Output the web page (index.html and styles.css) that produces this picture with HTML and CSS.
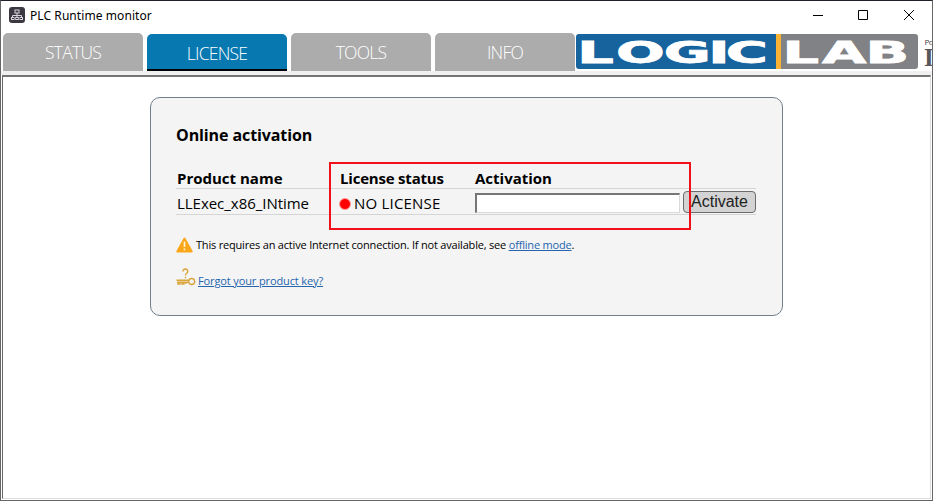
FILE: index.html
```html
<!DOCTYPE html>
<html lang="en">
<head>
<meta charset="utf-8">
<title>PLC Runtime monitor</title>
<link rel="stylesheet" href="styles.css">
</head>
<body>
<div class="window">
  <header class="titlebar">
    <svg class="app-icon" width="16" height="16" viewBox="0 0 16 16"><rect width="16" height="16" rx="3" fill="#3b3842"/><g fill="none" stroke="#d6d6dc" stroke-width="1"><rect x="6" y="3" width="4" height="3"/><path d="M8 6V10M3.500 10V8.500H12.500V10"/><rect x="2.500" y="10.500" width="2.500" height="2"/><rect x="6.750" y="10.500" width="2.500" height="2"/><rect x="11" y="10.500" width="2.500" height="2"/></g></svg>
    <span class="app-title">PLC Runtime monitor</span>
    <svg class="controls" width="104" height="12" viewBox="0 0 104 12" fill="none" stroke="#000"><path d="M0 6.500H10M45.500 1.500H54.500V10.500H45.500ZM91 1L101 11M101 1L91 11"/></svg>
  </header>
  <nav class="tabs">
    <a class="tab"><span>STATUS</span></a>
    <a class="tab active"><span>LICENSE</span></a>
    <a class="tab"><span>TOOLS</span></a>
    <a class="tab"><span>INFO</span></a>
    <svg class="logo" width="357" height="37" viewBox="575 33 357 37">
      <path d="M579 34H776V69H579Q576 69 576 66V37Q576 34 579 34Z" fill="#17639e"/>
      <rect x="776" y="34" width="5" height="35" fill="#f9b233"/>
      <path d="M781 34H915Q918 34 918 37V66Q918 69 915 69H781Z" fill="#808285"/>
      <text class="word" transform="translate(0 63) scale(1.850 1)" x="312 333 358.800 382.800 392.300">LOGIC</text>
      <text class="word" transform="translate(0 63) scale(1.850 1)" x="423 444.300 467.900">LAB</text>
      <text class="powered" x="924.500" y="45">Po</text>
      <text class="partner" x="924" y="66">I</text>
    </svg>
  </nav>
  <main class="view">
    <section class="card">
      <h1>Online activation</h1>
      <div class="grid head"><span class="h-name">Product name</span><span class="h-status">License status</span><span class="h-act">Activation</span></div>
      <div class="grid row">
        <span class="product">LLExec_x86_INtime</span>
        <span class="status"><i class="dot"></i><span>NO LICENSE</span></span>
        <span class="activation"><input type="text" aria-label="Activation"><button>Activate</button></span>
      </div>
      <div class="highlight"></div>
      <p class="note">
        <svg width="17" height="16" viewBox="0 0 17 16"><path d="M8.500 1.500L15.700 14.500H1.300Z" fill="#faa61a" stroke="#faa61a" stroke-width="2" stroke-linejoin="round"/><path d="M8.500 4.500V10M8.500 11.500V13.300" stroke="#fff3d0" stroke-width="1.700"/></svg>
        <span class="warn-text">This requires an active Internet connection. If not available, see <a>offline mode</a>.</span>
      </p>
      <p class="forgot">
        <svg width="20" height="19" viewBox="0 0 20 19" fill="none" stroke="#d9a53a" stroke-width="1.400"><path d="M7 3.500Q7.200 1 9.400 1T11.800 3.500Q11.800 4.700 10.300 5.500Q9.500 6 9.500 7.500M9.500 8.700V10.300"/><circle cx="15.700" cy="13.500" r="3"/><path d="M12.700 12.200H.5M12.700 14.200H1M2 14V16H4V14M6 14V16H8V14M10 14V16"/></svg>
        <a>Forgot your product key?</a>
      </p>
    </section>
  </main>
</div>
</body>
</html>
```

FILE: styles.css
```css
* { box-sizing: border-box; }
body { margin: 0; width: 933px; height: 501px; overflow: hidden; background: #fff; color: #000; font-family: "Open Sans", "Noto Sans", sans-serif; }
.window { width: 933px; height: 501px; border: 1px solid #666; border-top-color: #20202a; display: flex; flex-direction: column; }
.titlebar { height: 32px; flex: none; display: flex; align-items: center; padding: 0 18px 4px 8px; }
.app-icon { flex: none; }
.app-title { font-family: "Noto Sans", sans-serif; font-size: 12px; line-height: 16px; margin-left: 5px; padding-top: 2px; letter-spacing: 0.08px; white-space: nowrap; }
.controls { margin-left: auto; margin-right: -3px; }
.tabs { height: 42px; flex: none; display: flex; gap: 4px; padding-left: 2px; border-bottom: 4px solid #f0eff1; }
.tab { width: 140px; height: 38px; flex: none; background: #acacac; border-radius: 5px 5px 0 0; color: #fff; font-size: 17.5px; font-weight: 300; line-height: 38px; text-align: center; letter-spacing: -0.75px; }
.active { background: #0878b0; border-bottom: 2px solid #000; height: 37px; margin-top: 1px; line-height: 38px; }
.logo { flex: none; margin-left: -4px; }
.word { font: bold 31px "DejaVu Sans", sans-serif; fill: #fff; stroke: #fff; stroke-width: 0.8px; }
.powered { font: 8px "Open Sans", sans-serif; fill: #444; letter-spacing: -0.5px; }
.partner { font: bold 25px "Liberation Serif", serif; fill: #58585a; }
.view { flex: 1; margin: 0 1px 1px; border: 1px solid #dedede; border-top: 2px solid #747474; border-left: 1px solid #666; padding: 20px 0 0 147px; }
.card { position: relative; width: 633px; height: 219px; border: 1px solid #707f8e; border-radius: 10px; background: #f4f4f4; padding: 26px 25px 0; }
h1 { margin: 0; font-size: 16px; line-height: 22px; font-weight: 700; letter-spacing: -0.1px; }
.grid { width: 580px; display: grid; grid-template-columns: 163px 135px 281px; align-items: center; padding-left: 1px; border-bottom: 1px solid #d5d5d5; white-space: nowrap; }
.head { height: 22px; margin-top: 21px; font-size: 15px; font-weight: 700; line-height: 20px; }
.h-status { letter-spacing: -0.2px; }
.row { height: 26px; font-size: 15px; }
.product { padding-top: 2px; letter-spacing: -0.03px; }
.status { display: flex; align-items: center; gap: 4px; margin-left: -1px; padding-top: 2px; letter-spacing: 0.2px; }
.dot { width: 12px; height: 12px; margin: 2px -1px 0 0; border-radius: 50%; background: #f00; border: 1px solid #ff9d9d; }
.activation { display: flex; align-items: center; gap: 3px; }
input { width: 205px; height: 20px; margin-top: 2px; padding: 0 3px; border: 1px solid #d9d9d9; border-top: 2px solid #767676; border-left: 2px solid #767676; background: #fff; }
button { width: 73px; height: 22px; padding: 0; border: 1px solid #6c6c6c; border-radius: 4px; background: #d3d3d3; color: #222; font: 16px/18px "Liberation Sans", sans-serif; }
.highlight { position: absolute; left: 178px; top: 64px; width: 362px; height: 68px; border: 2px solid #f0101a; }
p { margin: 0; display: flex; align-items: center; font-size: 11px; line-height: 16px; white-space: nowrap; }
.note { margin-top: 22px; gap: 3px; letter-spacing: -0.19px; }
.forgot { margin-top: 14px; gap: 2px; height: 20px; letter-spacing: -0.12px; }
.forgot a { padding-top: 8px; }
a { color: #2465ae; }
p a { text-decoration: underline; }
```
